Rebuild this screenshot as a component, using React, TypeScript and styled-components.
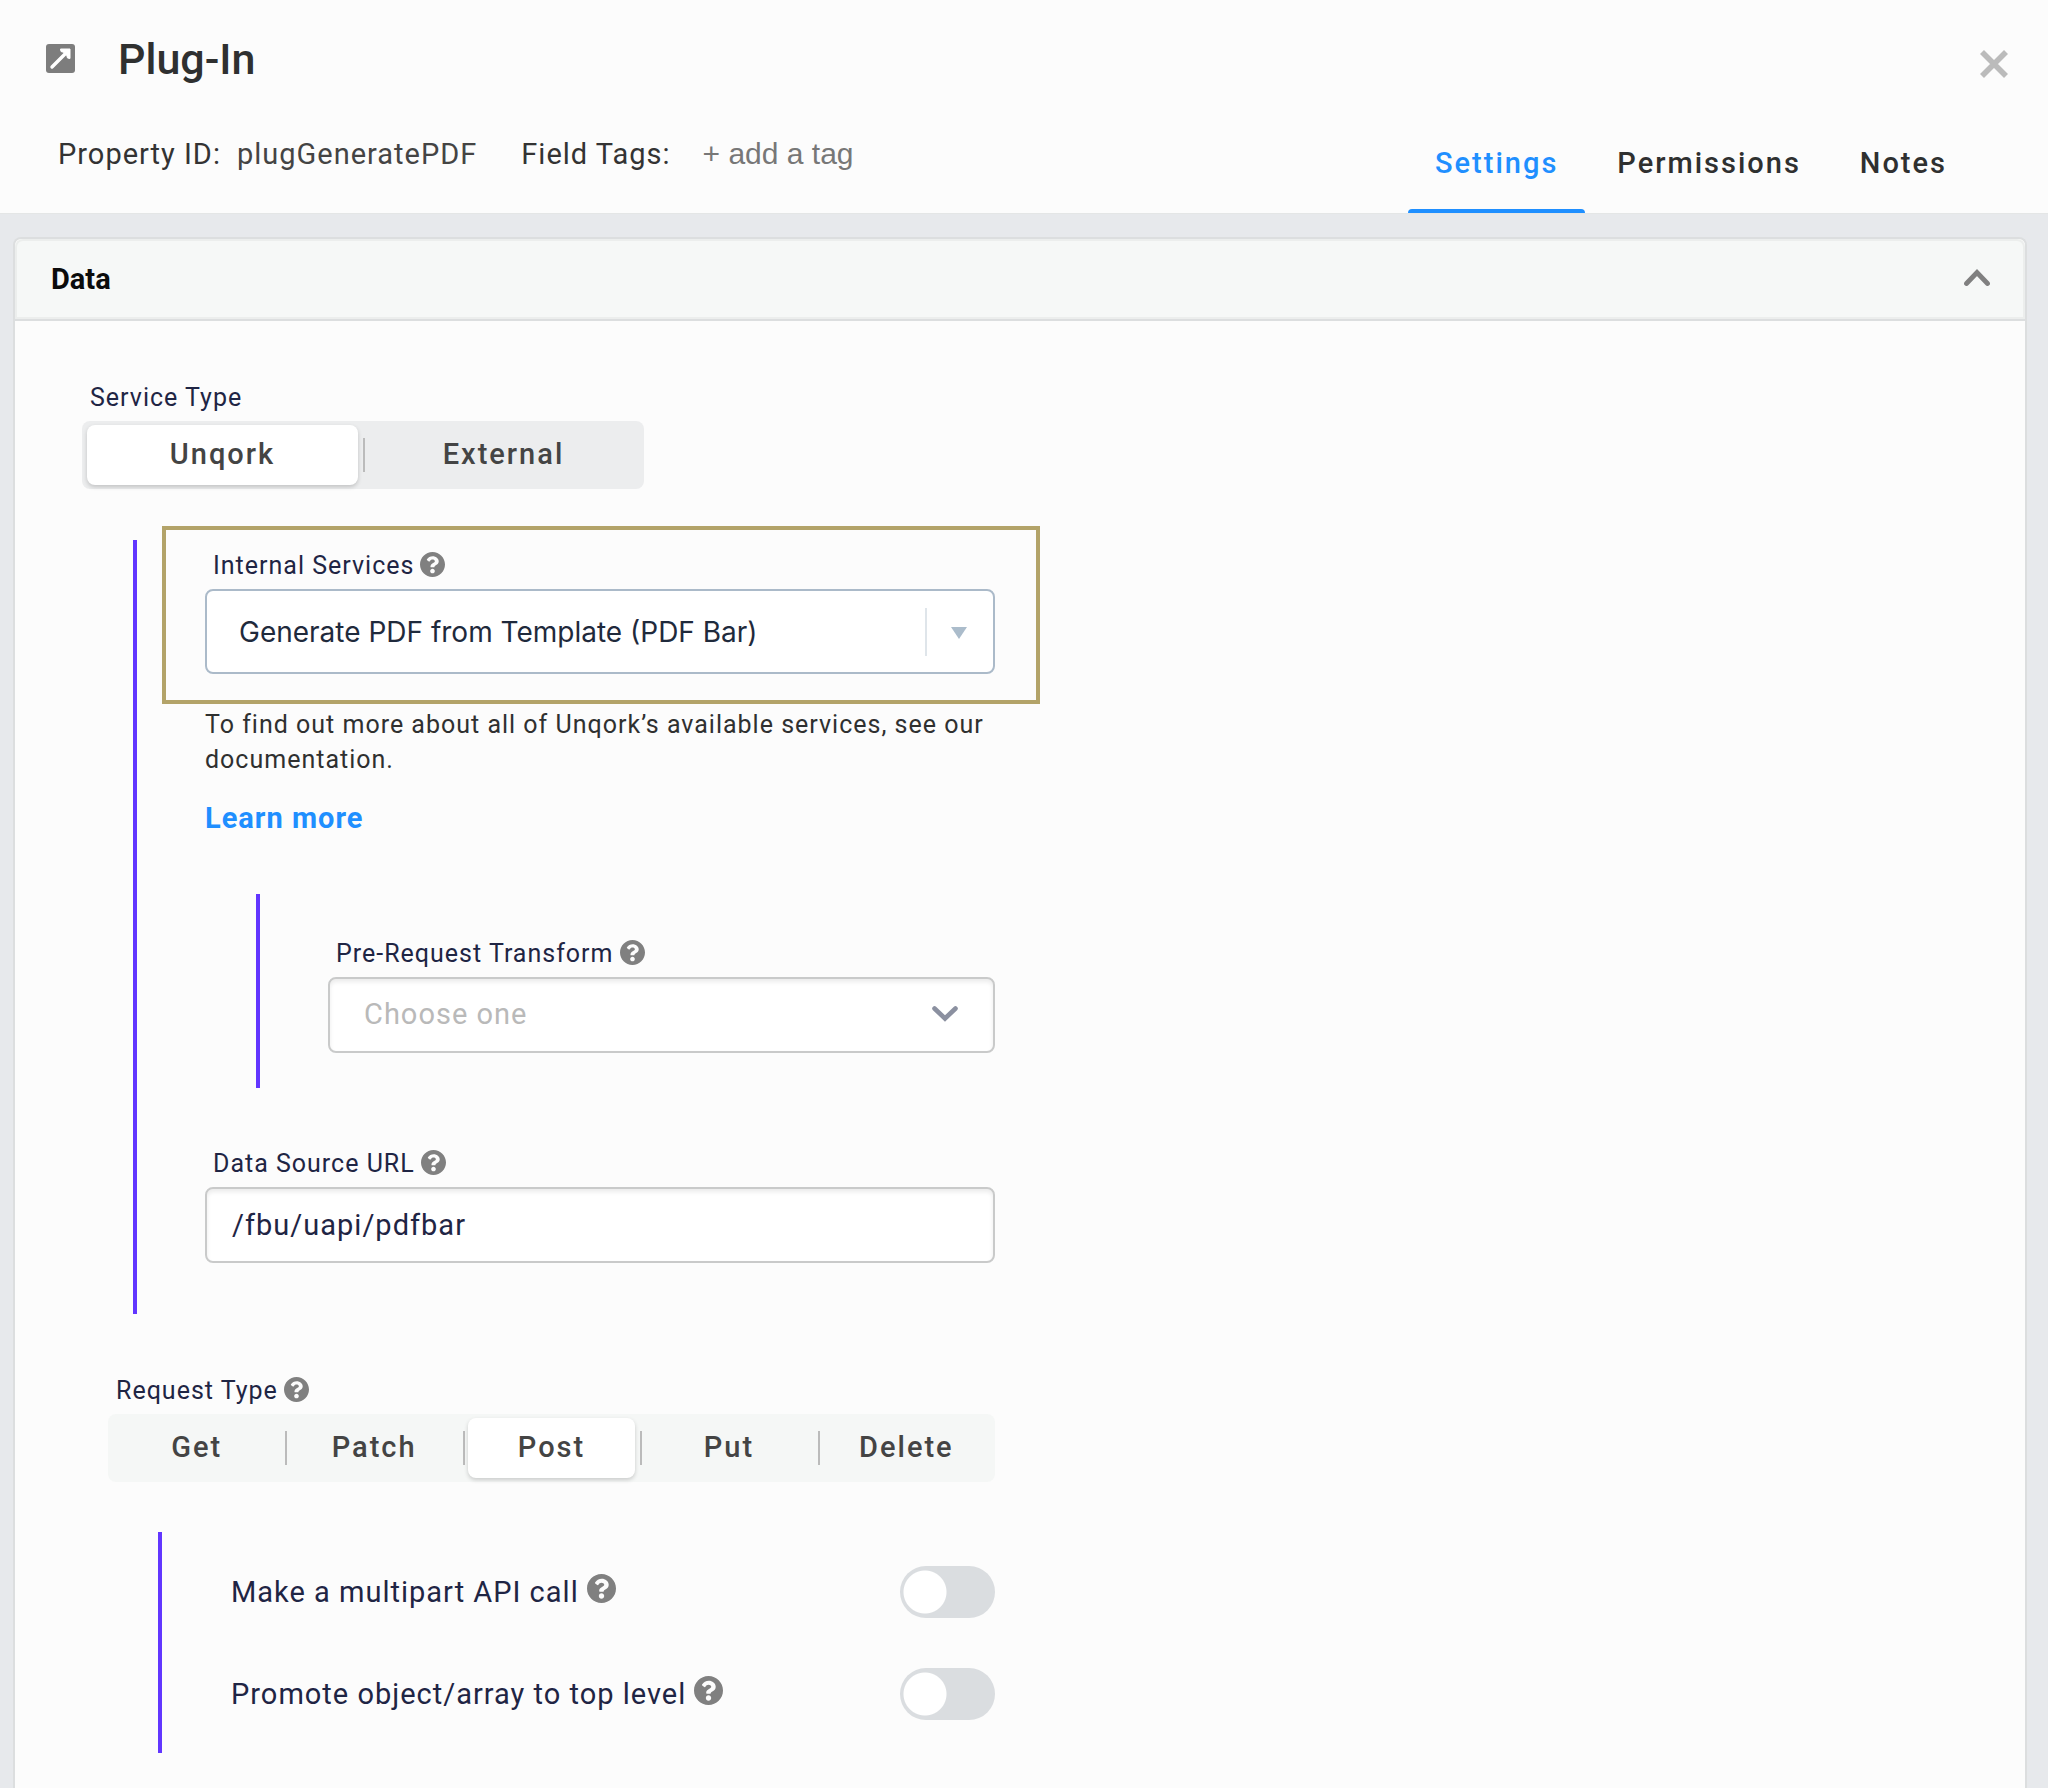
import React, { useState } from "react";
import styled, { createGlobalStyle, css } from "styled-components";

const GlobalStyle = createGlobalStyle`
  *, *::before, *::after { box-sizing: border-box; }
  html, body, #root { height: 100%; }
  body {
    margin: 0;
    background: #e7e9ec;
    color: #333;
    font-family: Roboto, "Liberation Sans", sans-serif;
    font-size: 29px;
    line-height: 36px;
    letter-spacing: 1px;
    overflow: hidden;
  }
  button, input, select { font: inherit; letter-spacing: inherit; color: inherit; margin: 0; }
`;

const ink = "#1f2544";
const blue = "#1f8fff";
const violet = "#6236ff";

const Modal = styled.div`
  min-height: 100%;
  display: flex;
  flex-direction: column;
`;

const Header = styled.header`
  height: 214px;
  flex: none;
  display: flex;
  justify-content: space-between;
  background: #fcfcfc;
  border-bottom: 1px solid #e4e6e6;
`;

const Heading = styled.div`
  display: flex;
  flex-direction: column;
  gap: 52px;
  padding: 34px 0 0 46px;
`;

const TitleRow = styled.div`
  display: flex;
  align-items: center;
  gap: 43px;

  svg { margin-bottom: 2px; }
`;

const Title = styled.h1`
  margin: 0;
  font-size: 43px;
  line-height: 50px;
  font-weight: 500;
  letter-spacing: 0;
  color: #2f3030;
`;

const Meta = styled.div`
  display: flex;
  align-items: center;
  padding-left: 12px;
  white-space: nowrap;
`;

const PropertyId = styled.span`
  margin: 0 44px 0 16px;
  color: #444;
`;

const TagButton = styled.button`
  margin-left: 32px;
  padding: 0;
  border: 0;
  background: none;
  font-family: "Liberation Sans", sans-serif;
  font-size: 30px;
  letter-spacing: 0;
  color: #777;
`;

const HeaderSide = styled.div`
  display: flex;
  flex-direction: column;
  align-items: flex-end;
  justify-content: space-between;
  padding: 50px 40px 0 0;
`;

const IconButton = styled.button`
  display: flex;
  padding: 0;
  border: 0;
  background: none;
`;

const Tabs = styled.nav`
  display: flex;
  gap: 5px;
  margin-right: 34px;
`;

const Tab = styled.button<{ $active?: boolean }>`
  display: flex;
  flex-direction: column;
  align-items: center;
  gap: 28px;
  padding: 0;
  border: 0;
  background: none;
  font-weight: 500;
  letter-spacing: 2px;
  color: ${(p) => (p.$active ? blue : "#2f3030")};

  span { padding: 0 27px; }
  &::after {
    content: "";
    width: 100%;
    height: 4px;
    border-radius: 4px 4px 0 0;
    background: ${(p) => (p.$active ? blue : "transparent")};
  }
`;

const Panel = styled.section`
  flex: 1;
  margin: 23px 21px 0 13px;
  border: 2px solid #dcdedf;
  border-bottom: 0;
  border-radius: 8px 8px 0 0;
  background: #fcfcfc;
`;

const PanelHeader = styled.div`
  display: flex;
  align-items: center;
  justify-content: space-between;
  height: 82px;
  padding: 0 35px 0 36px;
  border-bottom: 2px solid #dcdedf;
  border-radius: 8px 8px 0 0;
  background: #f6f8f7;
  box-shadow: inset 0 0 0 2px #eceeed;

  svg { margin-bottom: 4px; }
`;

const PanelTitle = styled.h2`
  margin: 0;
  font-size: 29px;
  line-height: 36px;
  font-weight: 700;
  letter-spacing: 0;
  color: #0b0c0c;
`;

const Form = styled.form`
  width: 980px;
  padding-top: 58px;
`;

const LabelRow = styled.div`
  display: flex;
  align-items: center;
  gap: 6px;
  height: 42px;
  padding: 0 0 4px 8px;

  svg { margin-bottom: 3px; }
`;

const Label = styled.label`
  font-size: 25px;
  color: ${ink};
`;

const Segments = styled.div<{ $tone: string }>`
  display: flex;
  height: 68px;
  border-radius: 8px;
  background: ${(p) => p.$tone};
`;

const Segment = styled.label`
  flex: 1 1 0;
  display: flex;
  padding: 4px 5px;
  font-weight: 500;
  letter-spacing: 2px;
  color: #444;
  background: linear-gradient(#bbb, #bbb) left center / 2px 34px no-repeat;

  &:first-child { background: none; }
  input { appearance: none; width: 0; height: 0; }
  span {
    flex: 1;
    display: flex;
    align-items: center;
    justify-content: center;
    padding-bottom: 2px;
    border-radius: 8px;
  }
  input:checked + span {
    background: #fff;
    box-shadow: 0 2px 4px rgba(0, 0, 0, 0.18);
  }
`;

const ServiceType = styled.div`
  width: 562px;
  margin-left: 67px;
`;

const Rule = styled.div`
  display: flex;
  flex-direction: column;
  border-left: 4px solid ${violet};
`;

const ServiceRule = styled(Rule)`
  height: 774px;
  margin: 51px 0 0 118px;
`;

const Highlight = styled.div`
  margin: -14px -45px 0 25px;
  padding: 17px 41px 26px 39px;
  border: 4px solid #b3a369;
`;

const SelectBox = styled.div<{ $strong?: boolean }>`
  display: grid;
  align-items: center;
  height: ${(p) => (p.$strong ? 85 : 76)}px;
  border: 2px solid ${(p) => (p.$strong ? "#abbac9" : "#c9caca")};
  border-radius: 8px;
  background: #fff;
  box-shadow: ${(p) => (p.$strong ? "none" : "inset 0 3px 4px rgba(0, 0, 0, 0.08)")};

  select {
    grid-area: 1 / 1;
    appearance: none;
    width: 100%;
    height: 100%;
    padding: 0 80px 2px 34px;
    border: 0;
    background: transparent;
    color: #b9b9b9;
  }
  ${(p) =>
    p.$strong &&
    css`
      select {
        padding: 0 80px 0 32px;
        font-family: Inter, Roboto, sans-serif;
        font-size: 28px;
        letter-spacing: 0;
        color: #1f2a3c;
      }
    `}
`;

const Caret = styled.div<{ $strong?: boolean }>`
  grid-area: 1 / 1;
  justify-self: end;
  display: flex;
  align-items: center;
  pointer-events: none;
  ${(p) =>
    p.$strong
      ? css`
          height: 48px;
          padding: 2px 26px 0 24px;
          border-left: 2px solid #dfe5ea;
        `
      : css`
          padding: 0 35px 2px;
        `}
`;

const Details = styled.div`
  padding: 3px 0 0 68px;
`;

const HelpText = styled.p`
  margin: 0 0 23px;
  font-size: 25px;
  line-height: 35px;
  color: #2f3030;
`;

const Link = styled.a`
  font-weight: 700;
  color: ${blue};
  text-decoration: none;
`;

const TransformRule = styled(Rule)`
  height: 194px;
  margin: 58px 0 57px 51px;
  padding: 41px 0 0 68px;
`;

const TextInput = styled.input`
  display: block;
  width: 100%;
  height: 76px;
  padding: 0 25px;
  border: 2px solid #c9caca;
  border-radius: 8px;
  background: #fff;
  box-shadow: inset 0 3px 4px rgba(0, 0, 0, 0.08);
  color: ${ink};
`;

const RequestType = styled.div`
  margin: 58px 0 0 93px;
`;

const OptionsRule = styled(Rule)`
  height: 221px;
  margin: 50px 0 0 143px;
  padding: 34px 0 0 69px;
  gap: 50px;
`;

const Option = styled.div`
  display: flex;
  align-items: center;
  gap: 8px;
  height: 52px;

  label { color: ${ink}; }
  svg { margin-bottom: 8px; }
`;

const Toggle = styled.input`
  appearance: none;
  width: 95px;
  height: 52px;
  margin-left: auto;
  border-radius: 26px;
  background: radial-gradient(circle at 25px 26px, #fff 21px, transparent 22px) #dadde0;

  &:checked {
    background: radial-gradient(circle at 70px 26px, #fff 21px, transparent 22px) ${blue};
  }
`;

const HelpIcon = ({ size = 25 }: { size?: number }) => (
  <svg width={size} height={size} viewBox="8 8 496 496" aria-hidden="true">
    <path
      fill="#808080"
      d="M504 256c0 136.997-111.043 248-248 248S8 392.997 8 256C8 119.083 119.043 8 256 8s248 111.083 248 248zM262.655 90c-54.497 0-89.255 22.957-116.549 63.758-3.536 5.286-2.353 12.415 2.715 16.258l34.699 26.31c5.205 3.947 12.621 3.008 16.665-2.122 17.864-22.658 30.113-35.797 57.303-35.797 20.429 0 45.698 13.148 45.698 32.958 0 14.976-12.363 22.667-32.534 33.976C247.128 238.528 216 254.941 216 296v4c0 6.627 5.373 12 12 12h56c6.627 0 12-5.373 12-12v-1.333c0-28.462 83.186-29.647 83.186-106.667 0-58.002-60.165-102-116.531-102zM256 338c-25.365 0-46 20.635-46 46 0 25.364 20.635 46 46 46s46-20.636 46-46c0-25.365-20.635-46-46-46z"
    />
  </svg>
);

const PlugIcon = () => (
  <svg width="29" height="29" viewBox="0 0 29 29" aria-hidden="true">
    <rect width="29" height="29" rx="3" fill="#7d7d7d" />
    <path d="M6 23 L20 9" stroke="#fff" strokeWidth="3.4" strokeLinecap="round" />
    <path d="M14.5 5 H24 V14.5 L21.5 14 L20.6 11 L18 8.4 L15 7.5 Z" fill="#fff" stroke="#fff" strokeLinejoin="round" />
  </svg>
);

interface Choice {
  name: string;
  legend: string;
  tone: string;
  items: string[];
  initial: string;
}

const SegmentedControl = ({ name, legend, tone, items, initial }: Choice) => {
  const [value, setValue] = useState(initial);
  return (
    <Segments $tone={tone} role="radiogroup" aria-label={legend}>
      {items.map((item) => (
        <Segment key={item}>
          <input type="radio" name={name} checked={value === item} onChange={() => setValue(item)} />
          <span>{item}</span>
        </Segment>
      ))}
    </Segments>
  );
};

export default function App() {
  const [url, setUrl] = useState("/fbu/uapi/pdfbar");
  return (
    <>
      <GlobalStyle />
      <Modal>
        <Header>
          <Heading>
            <TitleRow>
              <PlugIcon />
              <Title>Plug-In</Title>
            </TitleRow>
            <Meta>
              <span>Property ID:</span>
              <PropertyId>plugGeneratePDF</PropertyId>
              <span>Field Tags:</span>
              <TagButton type="button">+ add a tag</TagButton>
            </Meta>
          </Heading>
          <HeaderSide>
            <IconButton type="button" aria-label="Close">
              <svg width="28" height="28" viewBox="0 0 28 28" aria-hidden="true">
                <path d="M2 2 L26 26 M26 2 L2 26" stroke="#bbb" strokeWidth="5.6" />
              </svg>
            </IconButton>
            <Tabs>
              <Tab type="button" $active><span>Settings</span></Tab>
              <Tab type="button"><span>Permissions</span></Tab>
              <Tab type="button"><span>Notes</span></Tab>
            </Tabs>
          </HeaderSide>
        </Header>
        <Panel>
          <PanelHeader>
            <PanelTitle>Data</PanelTitle>
            <IconButton type="button" aria-label="Collapse Data">
              <svg width="26" height="17" viewBox="0 0 26 17" aria-hidden="true">
                <path d="M2.5 14.5 L13 3.5 L23.5 14.5" fill="none" stroke="#808080" strokeWidth="4.8" strokeLinecap="round" />
              </svg>
            </IconButton>
          </PanelHeader>
          <Form onSubmit={(e) => e.preventDefault()}>
            <ServiceType>
              <LabelRow>
                <Label as="span">Service Type</Label>
              </LabelRow>
              <SegmentedControl name="service" legend="Service Type" tone="#ecedee" items={["Unqork", "External"]} initial="Unqork" />
            </ServiceType>
            <ServiceRule>
              <Highlight>
                <LabelRow>
                  <Label htmlFor="internal">Internal Services</Label>
                  <HelpIcon />
                </LabelRow>
                <SelectBox $strong>
                  <select id="internal">
                    <option>Generate PDF from Template (PDF Bar)</option>
                  </select>
                  <Caret $strong>
                    <svg width="16" height="12" viewBox="0 0 16 12" aria-hidden="true">
                      <path d="M0 0 H16 L8 12 Z" fill="#abbccb" />
                    </svg>
                  </Caret>
                </SelectBox>
              </Highlight>
              <Details>
                <HelpText>To find out more about all of Unqork’s available services, see our documentation.</HelpText>
                <Link href="#learn-more">Learn more</Link>
                <TransformRule>
                  <LabelRow>
                    <Label htmlFor="transform">Pre-Request Transform</Label>
                    <HelpIcon />
                  </LabelRow>
                  <SelectBox>
                    <select id="transform">
                      <option>Choose one</option>
                    </select>
                    <Caret>
                      <svg width="26" height="16" viewBox="0 0 26 16" aria-hidden="true">
                        <path d="M2.5 2.5 L13 12.5 L23.5 2.5" fill="none" stroke="#8b90a0" strokeWidth="4.6" strokeLinecap="round" />
                      </svg>
                    </Caret>
                  </SelectBox>
                </TransformRule>
                <LabelRow>
                  <Label htmlFor="url">Data Source URL</Label>
                  <HelpIcon />
                </LabelRow>
                <TextInput id="url" type="text" value={url} onChange={(e) => setUrl(e.target.value)} />
              </Details>
            </ServiceRule>
            <RequestType>
              <LabelRow>
                <Label as="span">Request Type</Label>
                <HelpIcon />
              </LabelRow>
              <SegmentedControl name="request" legend="Request Type" tone="#f5f7f6" items={["Get", "Patch", "Post", "Put", "Delete"]} initial="Post" />
            </RequestType>
            <OptionsRule>
              <Option>
                <label htmlFor="multipart">Make a multipart API call</label>
                <HelpIcon size={29} />
                <Toggle id="multipart" type="checkbox" role="switch" />
              </Option>
              <Option>
                <label htmlFor="promote">Promote object/array to top level</label>
                <HelpIcon size={29} />
                <Toggle id="promote" type="checkbox" role="switch" />
              </Option>
            </OptionsRule>
          </Form>
        </Panel>
      </Modal>
    </>
  );
}
